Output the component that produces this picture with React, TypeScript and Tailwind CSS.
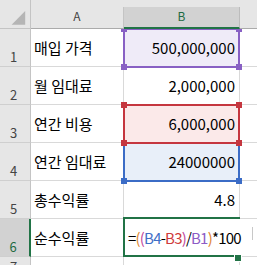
import React from 'react';

type Row = {
  n: number;
  label: string;
  value: React.ReactNode;
  h: number;
  fill?: string;
};

const Formula = () => (
  <span className="whitespace-nowrap tracking-[-0.8px]">
    <span className="text-black">=</span>
    <span className="text-[#e0842e]">(</span>
    <span className="text-[#c1479c]">(</span>
    <span className="text-[#3f6fc7]">B4</span>
    <span className="text-black">-</span>
    <span className="text-[#cf3b3b]">B3</span>
    <span className="text-[#c1479c]">)</span>
    <span className="text-black">/</span>
    <span className="text-[#8d5cc6]">B1</span>
    <span className="text-[#e0842e]">)</span>
    <span className="text-black">*100</span>
  </span>
);

const rows: Row[] = [
  { n: 1, label: '매입 가격', value: '500,000,000', h: 38, fill: 'bg-[#efebf8]' },
  { n: 2, label: '월 임대료', value: '2,000,000', h: 38 },
  { n: 3, label: '연간 비용', value: '6,000,000', h: 38, fill: 'bg-[#fbe9e9]' },
  { n: 4, label: '연간 임대료', value: '24000000', h: 38, fill: 'bg-[#e8eff9]' },
  { n: 5, label: '총수익률', value: '4.8', h: 38 },
  { n: 6, label: '순수익률', value: <Formula />, h: 38 },
  { n: 7, label: '', value: '', h: 20 },
];

const RangeBox = ({ top, border, square }: { top: number; border: string; square: string }) => (
  <>
    <div
      className={`absolute left-[123px] w-[117px] h-[40px] border-2 ${border}`}
      style={{ top }}
    />
    <div className={`absolute left-[121px] w-[6px] h-[6px] ${square}`} style={{ top: top - 2 }} />
    <div className={`absolute left-[236px] w-[6px] h-[6px] ${square}`} style={{ top: top - 2 }} />
    <div className={`absolute left-[121px] w-[6px] h-[6px] ${square}`} style={{ top: top + 36 }} />
    <div className={`absolute left-[236px] w-[6px] h-[6px] ${square}`} style={{ top: top + 36 }} />
  </>
);

export default function App() {
  return (
    <div className="w-[257px] h-[265px] overflow-hidden bg-white [font-family:'Noto_Sans_CJK_KR','Noto_Sans',sans-serif] text-black">
      {/* column header */}
      <div className="flex h-[29px] bg-[#e6e6e6]">
        <div className="w-[31px] shrink-0 h-full border-r border-b border-[#c4c4c4] flex">
          <svg width="31" height="28" viewBox="0 0 31 28">
            <polygon points="26,11 26,25 12,25" fill="#b5b5b5" />
          </svg>
        </div>
        <div className="w-[93px] shrink-0 h-full flex flex-col border-b border-[#ababab]">
          <div className="h-[7px]" />
          <div className="flex-1 border-r border-[#c4c4c4] flex items-center justify-center pb-[4px] text-[12px] leading-none text-[#444]">
            A
          </div>
        </div>
        <div className="w-[116px] shrink-0 h-full flex flex-col">
          <div className="h-[7px]" />
          <div className="flex-1 bg-[#d2d2d2] border-r border-[#bcbcbc] border-b-2 border-b-[#217346] flex items-center justify-center pb-[2px] text-[12px] leading-none text-[#1e6b43]">
            B
          </div>
        </div>
        <div className="flex-1 h-full border-b border-[#ababab]" />
      </div>

      {/* body */}
      <div className="relative overflow-hidden h-[236px]">
        {rows.map((r) => {
          const active = r.n === 6;
          return (
            <div key={r.n} className="flex" style={{ height: r.h }}>
              <div
                className={`w-[31px] shrink-0 flex items-end justify-center pr-[3px] pb-[3px] text-[13px] leading-none border-b border-b-[#cfcfcf] ${
                  active
                    ? 'bg-[#d2d2d2] text-[#1e6b43] border-r-2 border-r-[#217346]'
                    : 'bg-[#e6e6e6] text-[#444] border-r border-r-[#c4c4c4]'
                }`}
              >
                {r.n}
              </div>
              <div className="w-[93px] shrink-0 flex items-center pl-[3px] text-[15px] leading-none border-r border-b border-[#d9d9d9] whitespace-nowrap">
                {r.label}
              </div>
              <div
                className={`w-[116px] shrink-0 flex items-center text-[15px] leading-none border-b border-[#d9d9d9] whitespace-nowrap ${
                  active ? 'justify-start pl-[4px]' : 'justify-end pr-[4px] border-r'
                } ${r.fill ?? ''}`}
              >
                {r.value}
              </div>
              <div className="flex-1 border-b border-[#d9d9d9]" />
            </div>
          );
        })}

        {/* reference range boxes */}
        <RangeBox top={-1} border="border-[#8860c4]" square="bg-[#8860c4]" />
        <RangeBox top={113} border="border-[#3b6cc6]" square="bg-[#3b6cc6]" />
        <RangeBox top={75} border="border-[#c5363f]" square="bg-[#c5363f]" />

        {/* active editing cell */}
        <div className="absolute left-[123px] top-[188px] w-[117px] h-[40px] border-l-2 border-t-2 border-b-2 border-[#217346]" />
        <div className="absolute left-[234px] top-[225px] w-[8px] h-[8px] bg-[#217346] border border-white" />
        <div className="absolute left-[252px] top-[198px] w-px h-[13px] bg-[#c8c8c8]" />
      </div>
    </div>
  );
}
